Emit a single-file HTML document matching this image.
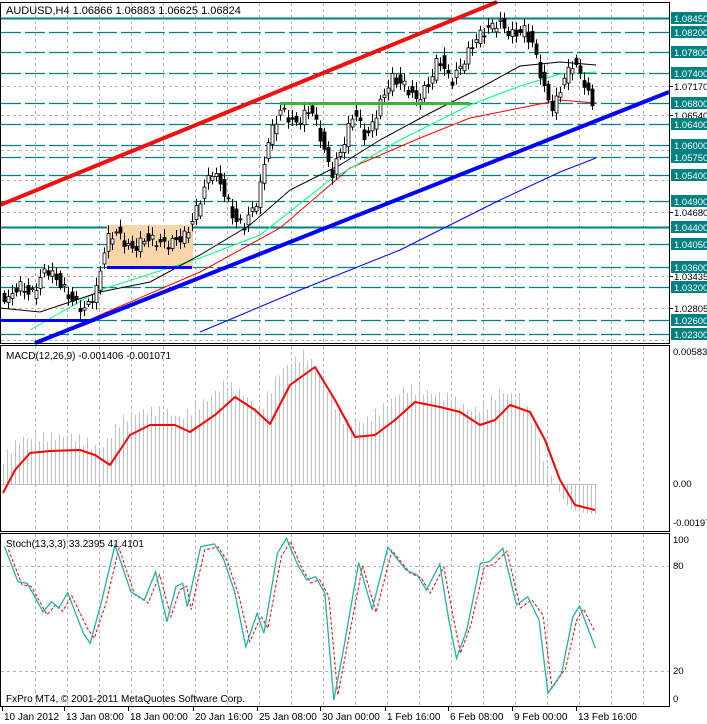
<!DOCTYPE html>
<html><head><meta charset="utf-8"><style>
html,body{margin:0;padding:0;background:#fff;width:707px;height:724px;overflow:hidden}
svg{display:block;font-family:"Liberation Sans","DejaVu Sans",sans-serif}
</style></head><body>
<svg id="s" width="707" height="724" viewBox="0 0 707 724" xmlns="http://www.w3.org/2000/svg">
<rect width="707" height="724" fill="#fff"/>
<g id="grid" stroke="#b4b4b4" stroke-dasharray="3,3" stroke-width="1"></g>
<g id="teal"></g>
<rect x="107" y="225" width="86" height="43" fill="#f8d6a8"/>
<g id="ma" fill="none" stroke-width="1"></g>
<g id="candles"></g>
<g id="lines"></g>
<g id="macd"></g>
<g id="stoch" fill="none"></g>
<g fill="none" stroke="#000" stroke-width="1">
<rect x="0.5" y="2.5" width="669" height="341"/>
<rect x="0.5" y="345.5" width="669" height="186"/>
<rect x="0.5" y="533.5" width="669" height="173"/>
</g>
<g id="labels" font-size="9.5"></g>
<text x="6" y="14" font-size="11" fill="#000">AUDUSD,H4  1.06866 1.06883 1.06625 1.06824</text>
<text x="6" y="359" font-size="10" fill="#000">MACD(12,26,9) -0.001406 -0.001071</text>
<text x="6" y="547" font-size="10" fill="#000">Stoch(13,3,3) 33.2395 41.4101</text>
<text x="6" y="702" font-size="10" fill="#000">FxPro MT4, © 2001-2011 MetaQuotes Software Corp.</text>
<g font-size="10" fill="#000" id="dates"></g>
</svg>
<script>
(function(){
var NS="http://www.w3.org/2000/svg";
function el(p,t,a,txt){var e=document.createElementNS(NS,t);for(var k in a)e.setAttribute(k,a[k]);if(txt!=null)e.textContent=txt;document.getElementById(p).appendChild(e);return e;}
function pts(a){return a.map(function(p){return p[0]+","+p[1]}).join(" ");}
for(var x=35.5;x<669;x+=32){
 el("grid","line",{x1:x,y1:3,x2:x,y2:343});
 el("grid","line",{x1:x,y1:346,x2:x,y2:531});
 el("grid","line",{x1:x,y1:534,x2:x,y2:706});
}
[86,115,150,180,212,276,308,340].forEach(function(y){el("grid","line",{x1:1,y1:y+.5,x2:669,y2:y+.5});});
[566,671].forEach(function(y){el("grid","line",{x1:1,y1:y+.5,x2:669,y2:y+.5});});
var lv=[[18,"1.08450",1],[32,"1.08200"],[52,"1.07800"],[73,"1.07400"],[103,"1.06800"],[124,"1.06400"],[145,"1.06000"],[157,"1.05750"],[175,"1.05400"],[201,"1.04900"],[227,"1.04400",1],[244,"1.04050"],[267,"1.03600"],[287,"1.03200"],[320,"1.02600"],[334,"1.02300"]];
lv.forEach(function(l){
 var a={x1:1,y1:l[0]+.5,x2:669,y2:l[0]+.5,stroke:"#008080","stroke-width":l[2]?2:1.3};
 if(!l[2])a["stroke-dasharray"]="20,4";
 el("teal","line",a);
});
var gl=[[86,"1.07170"],[115,"1.06540"],[212,"1.04680"],[276,"1.03435"],[308,"1.02805"]];
gl.forEach(function(l){el("labels","line",{x1:669,y1:l[0]+.5,x2:673,y2:l[0]+.5,stroke:"#000"});el("labels","text",{x:674,y:l[0]+4,fill:"#000"},l[1]);});
lv.forEach(function(l){
 el("labels","rect",{x:671,y:l[0]-6,width:36,height:12,fill:"#008080"});
 el("labels","text",{x:674,y:l[0]+4,fill:"#fff"},l[1]);
});
[[355,"0.005831"],[487,"0.00"],[526,"-0.00197"]].forEach(function(l){el("labels","text",{x:673,y:l[0],fill:"#000"},l[1]);});
[[543,"100"],[569,"80"],[674,"20"],[702,"0"]].forEach(function(l){el("labels","text",{x:673,y:l[0],fill:"#000"},l[1]);});
[[4,"10 Jan 2012"],[66,"13 Jan 08:00"],[130,"18 Jan 00:00"],[195,"20 Jan 16:00"],[259,"25 Jan 08:00"],[322,"30 Jan 00:00"],[387,"1 Feb 16:00"],[450,"6 Feb 08:00"],[514,"9 Feb 00:00"],[578,"13 Feb 16:00"]].forEach(function(d){el("dates","text",{x:d[0],y:720},d[1]);el("dates","line",{x1:d[0]-1.5,y1:707,x2:d[0]-1.5,y2:711,stroke:"#000"});});
function interp(P,x){for(var i=0;i<P.length-1;i++){if(x>=P[i][0]&&x<=P[i+1][0]){var t=(x-P[i][0])/(P[i+1][0]-P[i][0]);return P[i][1]+t*(P[i+1][1]-P[i][1]);}}return x<P[0][0]?P[0][1]:P[P.length-1][1];}
el("ma","polyline",{points:pts([[200,332],[300,290],[400,250],[500,200],[560,172],[596,158]]),stroke:"#0000ff"});
el("ma","polyline",{points:pts([[40,343],[100,315],[200,272],[280,228],[350,168],[420,138],[470,118],[520,108],[560,100],[596,103]]),stroke:"#ff0000"});
el("ma","polyline",{points:pts([[30,330],[100,290],[200,258],[260,235],[330,180],[400,140],[470,105],[520,86],[560,74],[596,72]]),stroke:"#00ff7f"});
el("ma","polyline",{points:pts([[0,308],[40,312],[100,292],[150,282],[200,255],[250,225],[290,190],[340,165],[380,140],[430,113],[480,88],[520,66],[560,62],[596,65]]),stroke:"#000"});
var P=[[0,290],[12,300],[22,285],[35,295],[50,268],[65,285],[75,300],[88,310],[100,290],[110,240],[120,232],[135,250],[150,238],[170,245],[190,235],[200,210],[215,170],[225,185],[238,220],[248,225],[262,198],[272,140],[285,108],[298,125],[315,108],[325,140],[335,175],[345,150],[358,110],[370,140],[382,108],[395,78],[408,85],[420,100],[432,85],[442,58],[455,82],[468,60],[480,38],[490,30],[502,22],[515,35],[528,30],[538,48],[548,90],[557,110],[567,80],[577,62],[587,80],[595,104]];
for(var x=4,i=0;x<596;x+=4,i++){
 var c=interp(P,x),n=interp(P,x+4),o=c+Math.sin(i*1.7)*6, cl=n+Math.cos(i*2.3)*5;
 var tp=Math.min(o,cl),bt=Math.max(o,cl);if(bt-tp<1)bt=tp+1;
 var w=4+Math.abs(Math.sin(i*0.9))*8;
 el("candles","line",{x1:x+.5,y1:tp-w*0.7,x2:x+.5,y2:bt+w*0.6,stroke:"#000"});
 el("candles","rect",{x:x-1,y:tp,width:3,height:bt-tp,fill:cl<o?"#fff":"#000",stroke:"#000","stroke-width":.8});
}
el("lines","line",{x1:0,y1:205,x2:497,y2:2,stroke:"#f01010","stroke-width":4});
el("lines","line",{x1:35,y1:343,x2:669,y2:92,stroke:"#0000ff","stroke-width":4});
el("lines","line",{x1:280,y1:103.5,x2:470,y2:103.5,stroke:"#3cb33c","stroke-width":3});
el("lines","line",{x1:107,y1:267.5,x2:192,y2:267.5,stroke:"#0000ff","stroke-width":3});
el("lines","line",{x1:0,y1:320.5,x2:95,y2:320.5,stroke:"#0000ff","stroke-width":3});
var R=[[3,493],[15,470],[30,453],[50,451],[80,450],[95,455],[110,465],[130,435],[150,425],[175,425],[190,432],[215,415],[235,397],[255,410],[270,424],[290,385],[315,367],[335,400],[355,437],[375,435],[395,420],[415,402],[440,407],[460,412],[480,425],[495,420],[510,405],[530,412],[545,440],[560,480],[575,505],[595,510]];
for(var x=3;x<597;x+=4){
 var y=interp(R,x+10)-(x<540?14:0)+Math.sin(x*0.7)*5;
 if(x>548)y=interp(R,x+6)+4;
 el("macd","line",{x1:x+.5,y1:484,x2:x+.5,y2:y,stroke:"#c0c0c0"});
}
el("macd","line",{x1:1,y1:484.5,x2:597,y2:484.5,stroke:"#c0c0c0"});
el("macd","polyline",{points:pts(R),fill:"none",stroke:"#ff0000","stroke-width":2,"stroke-linejoin":"round"});
var Z=[[10,80],[40,185],[60,190],[75,225],[95,275],[115,245],[130,265],[150,218],[185,340],[200,370],[225,245],[255,75],[290,215],[320,240],[345,155],[370,305],[390,200],[405,190],[415,260],[445,80],[475,72],[495,115],[520,215],[545,380],[570,280],[585,340],[615,100],[635,55],[660,135],[680,180],[700,170],[720,220],[740,540],[760,400],[795,128],[825,268],[860,82],[900,150],[925,165],[945,210],[975,132],[995,300],[1012,415],[1035,330],[1065,130],[1085,125],[1115,85],[1145,255],[1170,230],[1195,300],[1215,520],[1245,460],[1270,290],[1285,258],[1320,385]];
var S=Z.map(function(p){return [(p[0]/2.217).toFixed(1),(520+p[1]/3).toFixed(1)];});
var D=Z.map(function(p){return [(p[0]/2.217+4).toFixed(1),(520+p[1]/3+(p[1]<300?3:-5)).toFixed(1)];});
D[D.length-1]=[595,632];
el("stoch","polyline",{points:pts(D),stroke:"#ff0000","stroke-dasharray":"3,2"});
el("stoch","polyline",{points:pts(S),stroke:"#20b2aa","stroke-width":1.3});
})();
</script>
</body></html>
